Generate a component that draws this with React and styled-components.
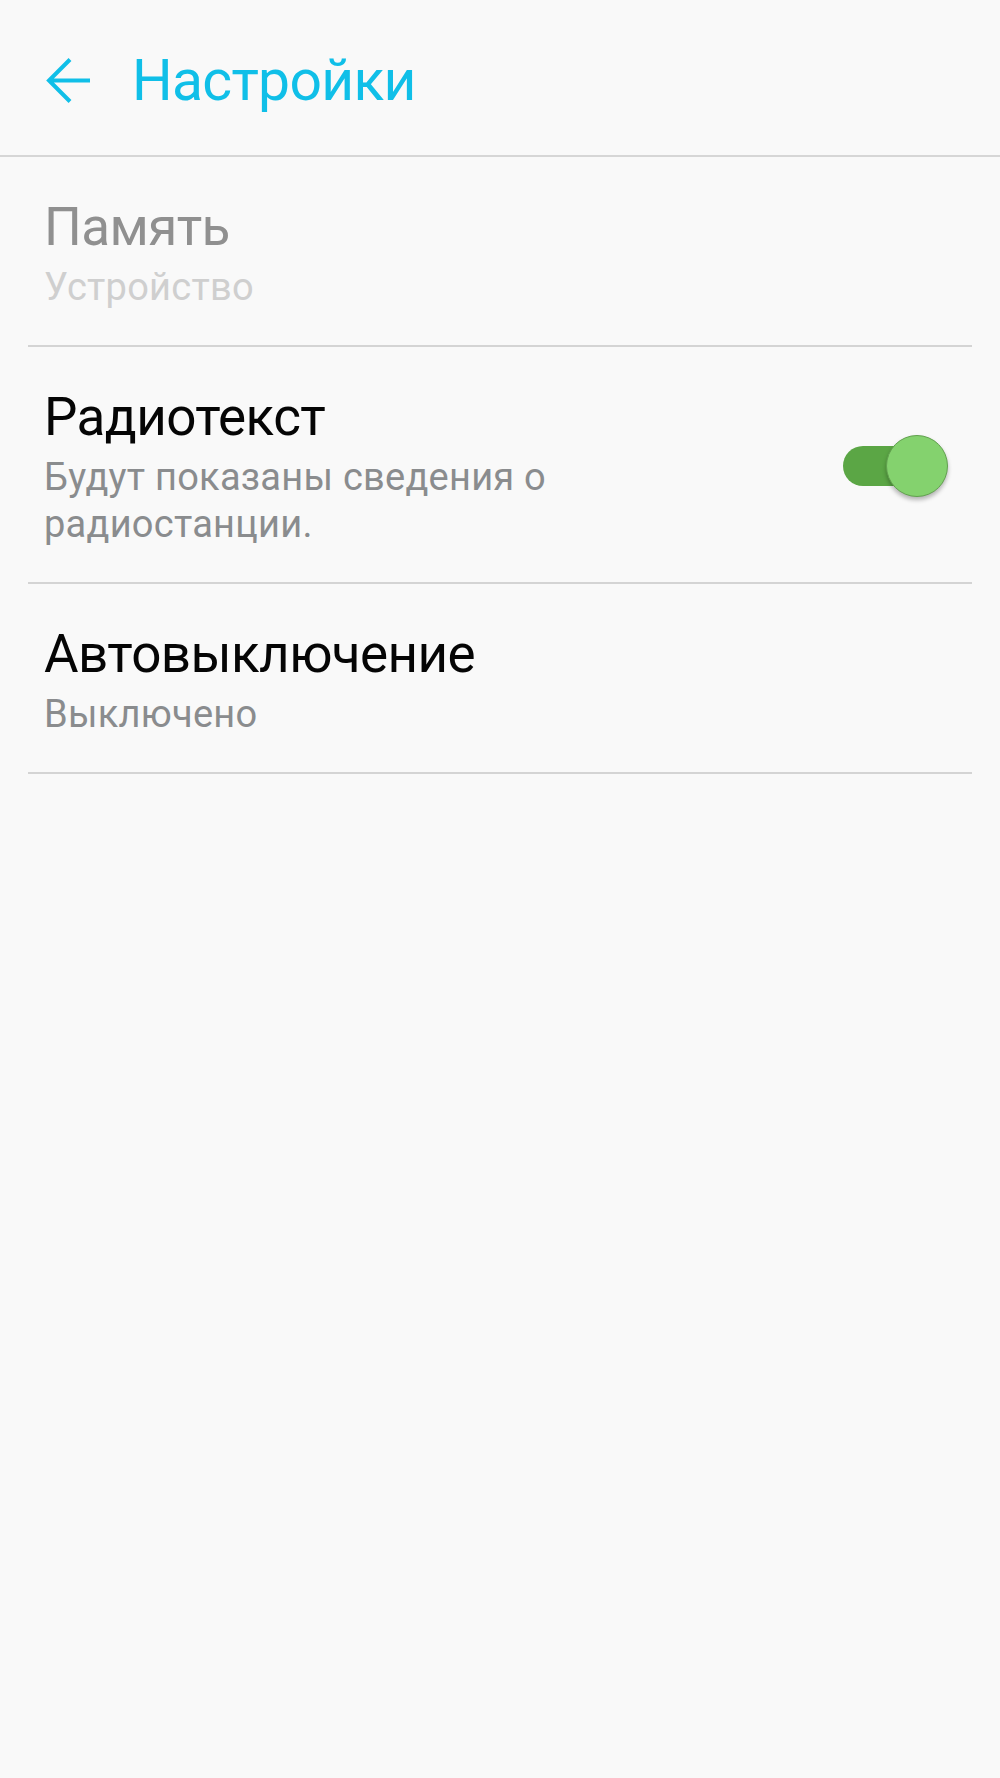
import React, { useState } from "react";
import styled, { createGlobalStyle } from "styled-components";

const GlobalStyle = createGlobalStyle`
  html, body {
    margin: 0;
    padding: 0;
    background: #f9f9f9;
  }
  body {
    font-family: Roboto, "Noto Sans", "Liberation Sans", sans-serif;
  }
`;

const Screen = styled.div`
  width: 1000px;
  min-height: 1778px;
  background: #f9f9f9;
`;

const Header = styled.header`
  height: 157px;
  box-sizing: border-box;
  padding: 6px 0 0 46px;
  display: flex;
  align-items: center;
  border-bottom: 2px solid #d6d6d6;
`;

const BackButton = styled.button`
  width: 44px;
  height: 46px;
  padding: 0;
  border: none;
  background: none;
  display: flex;
  align-items: center;
  justify-content: center;
  margin-right: 42px;
  cursor: pointer;
`;

const Title = styled.h1`
  margin: 0;
  font-size: 57px;
  font-weight: 400;
  color: #10bfe8;
  letter-spacing: -0.7px;
`;

const List = styled.div`
  display: flex;
  flex-direction: column;
`;

const Item = styled.div`
  margin: 0 28px;
  padding: 39px 23px 34px 16px;
  display: flex;
  align-items: center;
  gap: 24px;
  border-bottom: 2px solid #d4d4d4;
`;

const Texts = styled.div`
  flex: 1;
  display: flex;
  flex-direction: column;
`;

const ItemTitle = styled.div`
  font-size: 53px;
  line-height: 62px;
  letter-spacing: -0.6px;
  color: ${(p) => (p.disabled ? "#909090" : "#050505")};
`;

const ItemSub = styled.div`
  margin-top: 6px;
  font-size: 38px;
  line-height: 47px;
  letter-spacing: 0.25px;
  max-width: 530px;
  color: ${(p) => (p.disabled ? "#cfcfcf" : "#8a8c8e")};
`;

const Switch = styled.div`
  position: relative;
  width: 106px;
  height: 64px;
  flex-shrink: 0;
  cursor: pointer;
`;

const Track = styled.div`
  position: absolute;
  left: 0;
  top: 11px;
  width: 86px;
  height: 40px;
  border-radius: 20px;
  background: ${(p) => (p.on ? "#5ba645" : "#b5b5b5")};
`;

const Thumb = styled.div`
  position: absolute;
  top: 0;
  left: ${(p) => (p.on ? "43px" : "0")};
  width: 60px;
  height: 60px;
  border-radius: 50%;
  background: ${(p) => (p.on ? "#84d26e" : "#f1f1f1")};
  border: 1px solid ${(p) => (p.on ? "#62a14f" : "#bdbdbd")};
  box-shadow: 0 3px 4px rgba(0, 0, 0, 0.28);
`;

const ArrowIcon = () => (
  <svg width="44" height="46" viewBox="0 0 44 46" fill="none">
    <path
      d="M44 22.5H4M24 1.5L3 22.5L24 43.5"
      stroke="#10bfe8"
      strokeWidth="4"
    />
  </svg>
);

const App = () => {
  const [radioText, setRadioText] = useState(true);

  return (
    <Screen>
      <GlobalStyle />
      <Header>
        <BackButton aria-label="Назад">
          <ArrowIcon />
        </BackButton>
        <Title>Настройки</Title>
      </Header>
      <List>
        <Item>
          <Texts>
            <ItemTitle disabled>Память</ItemTitle>
            <ItemSub disabled>Устройство</ItemSub>
          </Texts>
        </Item>
        <Item>
          <Texts>
            <ItemTitle>Радиотекст</ItemTitle>
            <ItemSub>Будут показаны сведения о радиостанции.</ItemSub>
          </Texts>
          <Switch onClick={() => setRadioText(!radioText)}>
            <Track on={radioText} />
            <Thumb on={radioText} />
          </Switch>
        </Item>
        <Item>
          <Texts>
            <ItemTitle>Автовыключение</ItemTitle>
            <ItemSub>Выключено</ItemSub>
          </Texts>
        </Item>
      </List>
    </Screen>
  );
};

export default App;
